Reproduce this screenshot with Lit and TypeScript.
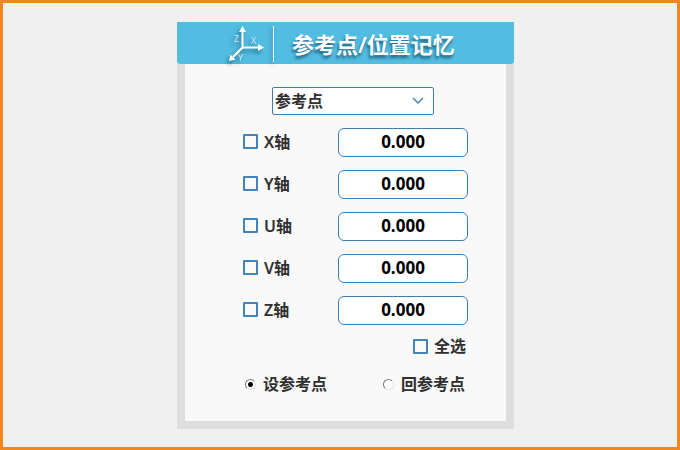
import { LitElement, html, css } from "lit";
import { customElement, state } from "lit/decorators.js";

@customElement("app-root")
export class AppRoot extends LitElement {
  @state() private axes = ["X", "Y", "U", "V", "Z"].map((name) => ({
    name,
    checked: false,
    value: "0.000",
  }));

  static styles = css`
    :host {
      display: block;
      box-sizing: border-box;
      min-height: 100vh;
      padding: 19px 0 18px 11px;
      border: 3px solid #f0861e;
      background: #f0f0f0;
      color: #303030;
      font: 600 16px/20px "Noto Sans", "Noto Sans CJK SC", sans-serif;
    }
    * {
      box-sizing: border-box;
    }
    .panel {
      width: fit-content;
      margin: 0 auto;
    }
    .head {
      display: flex;
      align-items: center;
      gap: 18px;
      padding: 0 58px 0 48px;
      background: #53bce1;
      border-radius: 0 0 3px 3px;
      color: #fff;
    }
    .mark {
      display: block;
      flex: none;
      filter: drop-shadow(-2px 3px 2px rgba(0, 50, 70, 0.55));
    }
    .letter {
      font: 400 9px "Noto Sans", sans-serif;
      fill: #c4e8f5;
    }
    .title {
      margin: 0;
      padding-top: 2px;
      font-size: 22px;
      line-height: 40px;
      font-weight: 600;
      white-space: nowrap;
      text-shadow: -1px 3px 3px rgba(0, 50, 70, 0.65);
    }
    .body {
      display: flex;
      flex-direction: column;
      gap: 13px;
      width: 337px;
      padding: 23px 38px 22px 58px;
      border: solid #dedede;
      border-width: 0 8px 8px;
      background: #f9f9f9;
    }
    .pick {
      position: relative;
      width: 162px;
      margin-left: 29px;
    }
    .select {
      display: block;
      appearance: none;
      width: 100%;
      height: 28px;
      padding: 0 2px;
      border: 1px solid #3f7fb5;
      border-radius: 2px;
      background: #fff;
      color: inherit;
      font: inherit;
    }
    .chevron {
      position: absolute;
      right: 10px;
      top: 10px;
      pointer-events: none;
    }
    .row {
      display: flex;
      align-items: center;
      justify-content: space-between;
      height: 29px;
    }
    .label {
      display: flex;
      align-items: center;
      gap: 6px;
      padding-bottom: 2px;
    }
    .box {
      appearance: none;
      width: 15px;
      height: 15px;
      margin: 0;
      border: 2px solid #4484ba;
      border-radius: 1px;
      background: #fafafa;
    }
    .box:checked {
      background: #4484ba;
    }
    .value {
      width: 130px;
      height: 29px;
      padding: 0 0 2px;
      border: 1px solid #3f7fb5;
      border-radius: 6px;
      background: #fff;
      color: #000;
      font: 700 17px/25px "Open Sans", "Noto Sans", sans-serif;
      text-align: center;
    }
    .all {
      align-self: flex-end;
      height: 18px;
      padding-right: 2px;
    }
    .modes {
      display: flex;
      align-items: center;
      justify-content: space-between;
      height: 30px;
      padding: 0 3px 0 2px;
    }
    .mode {
      display: flex;
      align-items: center;
      gap: 7px;
    }
    .radio {
      appearance: none;
      width: 11px;
      height: 11px;
      margin: 0;
      border: 1px solid;
      border-color: #777 #e4e4e4 #e4e4e4 #777;
      border-radius: 50%;
      background: #fff;
    }
    .radio:checked {
      background: radial-gradient(circle, #000 2px, #fff 3px);
    }
  `;

  private toggle(index: number, e: Event) {
    const checked = (e.target as HTMLInputElement).checked;
    this.axes = this.axes.map((a, i) => (i === index ? { ...a, checked } : a));
  }

  private toggleAll(e: Event) {
    const checked = (e.target as HTMLInputElement).checked;
    this.axes = this.axes.map((a) => ({ ...a, checked }));
  }

  render() {
    return html`
      <main class="panel">
        <header class="head">
          <svg class="mark" width="49" height="42" viewBox="0 0 49 42" fill="none" stroke="#fff">
            <path d="M17.500 9V25.500H33" stroke-width="2" />
            <path d="M17.500 25.500L8 35" stroke-width="2.400" />
            <path
              d="M17.500 4L21 10H14ZM39 25.500L33 22V29ZM4 39L5.500 32.500L10.500 37.500Z"
              fill="#fff"
              stroke="none"
            />
            <path d="M48.500 4V40" />
            <g class="letter" stroke="none">
              <text x="9" y="20">Z</text>
              <text x="26" y="22">X</text>
              <text x="13" y="39">Y</text>
            </g>
          </svg>
          <h1 class="title">参考点/位置记忆</h1>
        </header>
        <form class="body">
          <div class="pick">
            <select class="select" aria-label="参考点/位置记忆">
              <option>参考点</option>
            </select>
            <svg class="chevron" width="12" height="8" viewBox="0 0 12 8" fill="none" stroke="#4484ba" stroke-width="1.500">
              <path d="M1 1L6 6L11 1" />
            </svg>
          </div>
          ${this.axes.map(
            (axis, i) => html`
              <div class="row">
                <label class="label">
                  <input class="box" type="checkbox" .checked=${axis.checked} @change=${(e: Event) => this.toggle(i, e)} />
                  <span>${axis.name}轴</span>
                </label>
                <input class="value" type="text" aria-label="${axis.name}轴" .value=${axis.value} />
              </div>
            `
          )}
          <label class="label all">
            <input class="box" type="checkbox" .checked=${this.axes.every((a) => a.checked)} @change=${this.toggleAll} />
            <span>全选</span>
          </label>
          <div class="modes">
            <label class="mode">
              <input class="radio" type="radio" name="mode" checked />
              <span>设参考点</span>
            </label>
            <label class="mode">
              <input class="radio" type="radio" name="mode" />
              <span>回参考点</span>
            </label>
          </div>
        </form>
      </main>
    `;
  }
}
